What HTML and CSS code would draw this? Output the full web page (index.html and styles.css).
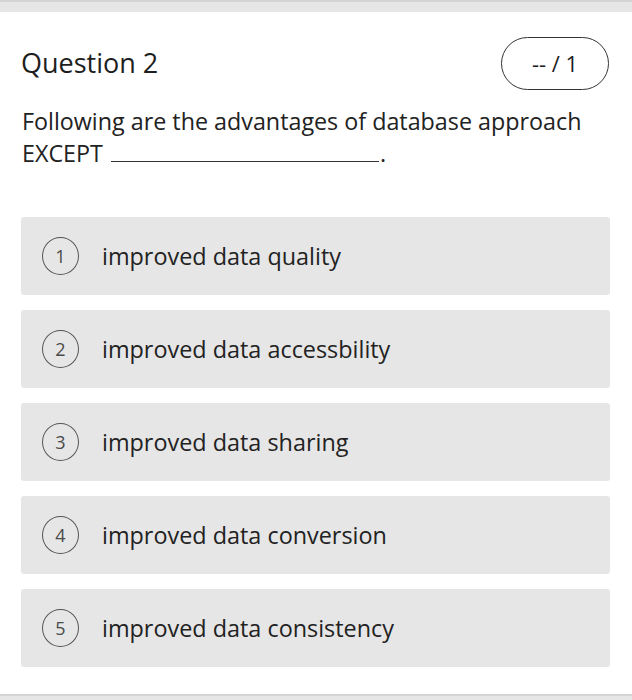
FILE: index.html
```html
<!DOCTYPE html>
<html>
<head>
<meta charset="utf-8">
<link rel="stylesheet" href="styles.css">
</head>
<body>
<div class="topbar"></div>
<main class="card">
  <header class="head">
    <h1 class="title">Question 2</h1>
    <div class="score">-- / 1</div>
  </header>
  <p class="prompt">Following are the advantages of database approach EXCEPT <span class="blank"></span>.</p>
  <ol class="options">
    <li class="opt"><span class="num">1</span><span class="label">improved data quality</span></li>
    <li class="opt"><span class="num">2</span><span class="label">improved data accessbility</span></li>
    <li class="opt"><span class="num">3</span><span class="label">improved data sharing</span></li>
    <li class="opt"><span class="num">4</span><span class="label">improved data conversion</span></li>
    <li class="opt"><span class="num">5</span><span class="label">improved data consistency</span></li>
  </ol>
</main>
<div class="bottombar"></div>
</body>
</html>
```

FILE: styles.css
```css
* { box-sizing: border-box; }
html, body { margin: 0; padding: 0; }
body {
  width: 632px;
  height: 700px;
  background: #fff;
  font-family: "Open Sans", "Noto Sans", sans-serif;
  color: #222;
  display: flex;
  flex-direction: column;
  overflow: hidden;
}
.topbar {
  height: 12px;
  background: #e6e6e6;
  border-top: 2px solid #d4d4d4;
  flex: none;
}
.card {
  flex: 1;
  padding: 23px 22px 0 21px;
}
.head {
  display: flex;
  align-items: center;
  justify-content: space-between;
  height: 56px;
  padding-right: 1px;
}
.title {
  margin: 0 0 1px 0;
  font-size: 27px;
  font-weight: 400;
  color: #1e1e1e;
}
.score {
  width: 108px;
  height: 53px;
  border: 1.5px solid #333;
  border-radius: 27px;
  display: flex;
  align-items: center;
  justify-content: center;
  font-size: 22px;
  color: #1e1e1e;
}
.prompt {
  margin: 14px 0 0 1px;
  font-size: 23.3px;
  line-height: 32px;
  color: #222;
}
.blank {
  display: inline-block;
  width: 268px;
  border-bottom: 1.5px solid #333;
  vertical-align: baseline;
  margin: 0 1px 0 2px;
}
.options {
  list-style: none;
  margin: 48px 0 0;
  padding: 0;
  display: flex;
  flex-direction: column;
  gap: 15px;
}
.opt {
  height: 78px;
  background: #e6e6e6;
  border-radius: 3px;
  display: flex;
  align-items: center;
  padding-left: 21px;
}
.num {
  width: 37px;
  height: 38px;
  border: 1.5px solid #555;
  border-radius: 50%;
  display: flex;
  align-items: center;
  justify-content: center;
  font-size: 18px;
  color: #4a4a4a;
  flex: none;
}
.label {
  margin-left: 23px;
  font-size: 23.4px;
  color: #222;
}
.bottombar {
  height: 6px;
  background: #e6e6e6;
  border-top: 2px solid #d4d4d4;
  flex: none;
}
```
